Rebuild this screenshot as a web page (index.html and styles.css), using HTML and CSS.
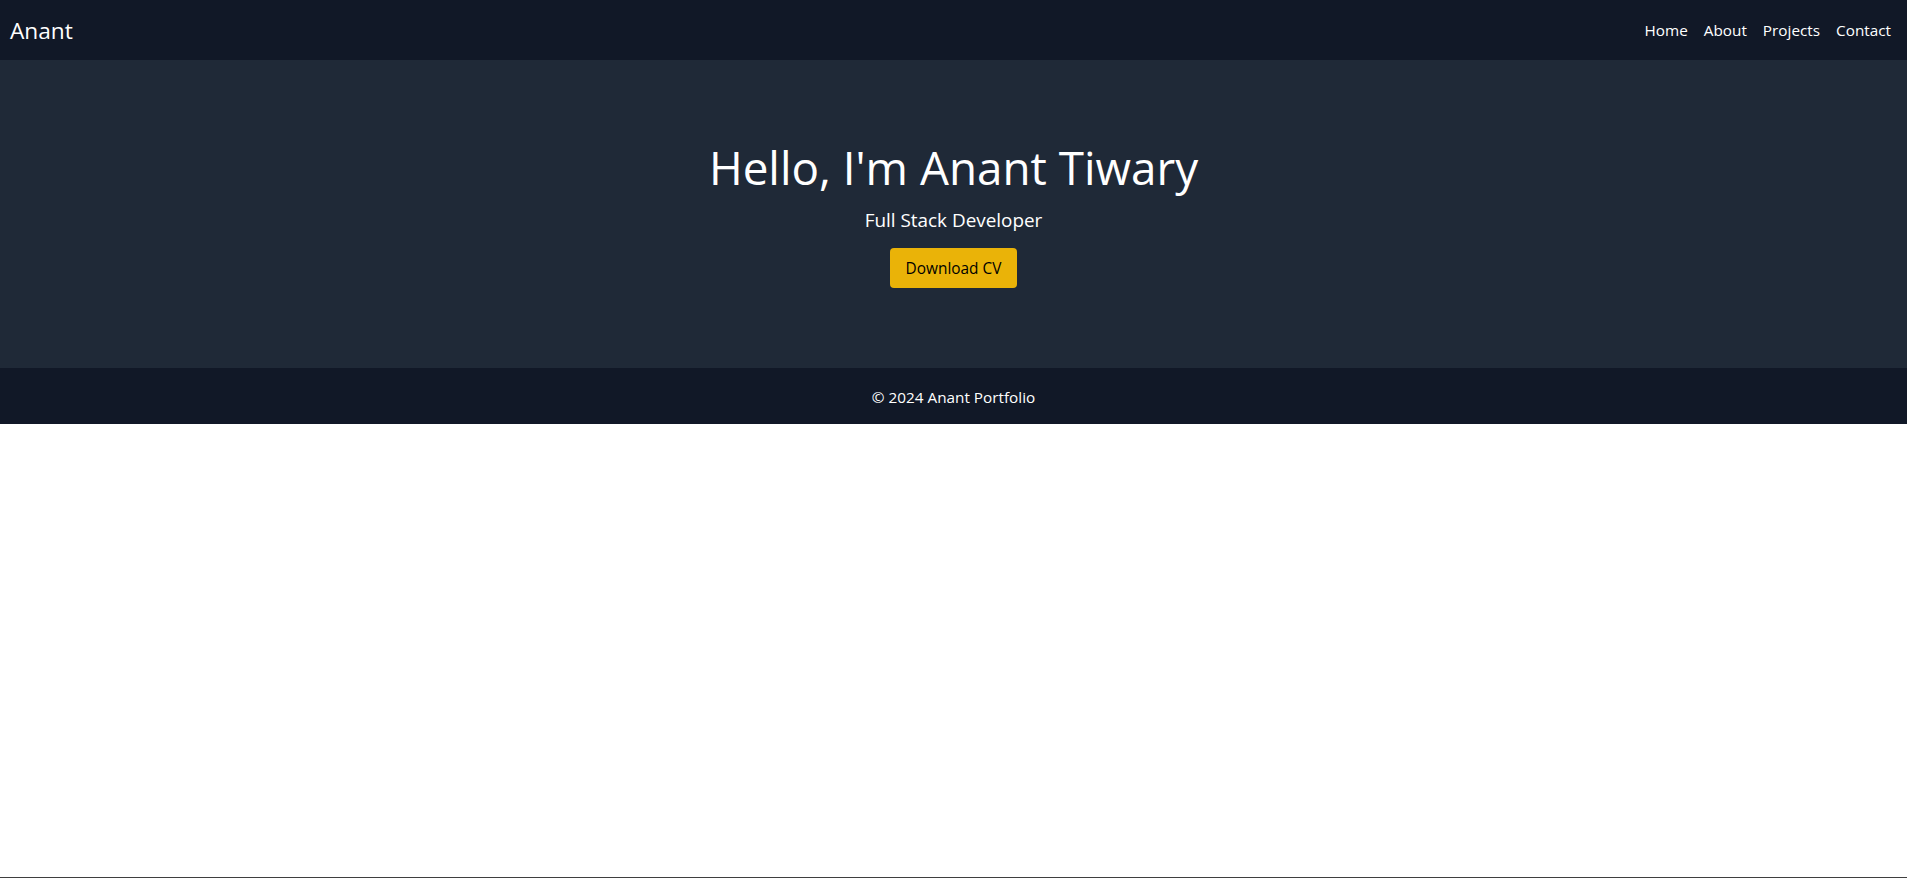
FILE: index.html
```html
<!DOCTYPE html>
<html lang="en">
<head>
<meta charset="utf-8">
<title>Anant Portfolio</title>
<link rel="stylesheet" href="styles.css">
</head>
<body>
<div class="page">
  <nav class="navbar">
    <div class="brand">Anant</div>
    <ul class="nav-links">
      <li><a href="#">Home</a></li>
      <li><a href="#">About</a></li>
      <li><a href="#">Projects</a></li>
      <li><a href="#">Contact</a></li>
    </ul>
  </nav>
  <section class="hero">
    <h1 class="hero-title">Hello, I'm Anant Tiwary</h1>
    <p class="hero-sub">Full Stack Developer</p>
    <a class="btn" href="#">Download CV</a>
  </section>
  <footer class="footer">© 2024 Anant Portfolio</footer>
</div>
</body>
</html>
```
FILE: styles.css
```css
* { box-sizing: border-box; }
html, body { margin: 0; padding: 0; }
body {
  font-family: "Open Sans", "Noto Sans", sans-serif;
  color: #fff;
  background: #fff;
}
.page {
  min-height: 100vh;
  border-bottom: 1px solid #3f3f3f;
}
.navbar {
  height: 60px;
  background: #111827;
  display: flex;
  align-items: center;
  justify-content: space-between;
  padding: 0 16px 0 10px;
}
.brand {
  font-size: 22.7px;
}
.nav-links {
  list-style: none;
  margin: 0;
  padding: 0;
  display: flex;
  gap: 16px;
}
.nav-links a {
  color: #fff;
  text-decoration: none;
  font-size: 15.3px;
}
.hero {
  background: #1f2937;
  padding: 83px 16px 80px;
  display: flex;
  flex-direction: column;
  align-items: center;
  text-align: center;
}
.hero-title {
  margin: 0 0 15px;
  font-size: 45.8px;
  line-height: 48px;
  font-weight: 400;
}
.hero-sub {
  margin: 0 0 14px;
  font-size: 18.9px;
  line-height: 28px;
}
.btn {
  display: inline-block;
  background: #eab308;
  color: #000;
  text-decoration: none;
  font-size: 15.4px;
  line-height: 24px;
  padding: 9px 16px 7px;
  border-radius: 4px;
}
.footer {
  background: #111827;
  padding: 17px 16px 15px;
  text-align: center;
  font-size: 15.3px;
  line-height: 24px;
}
```
